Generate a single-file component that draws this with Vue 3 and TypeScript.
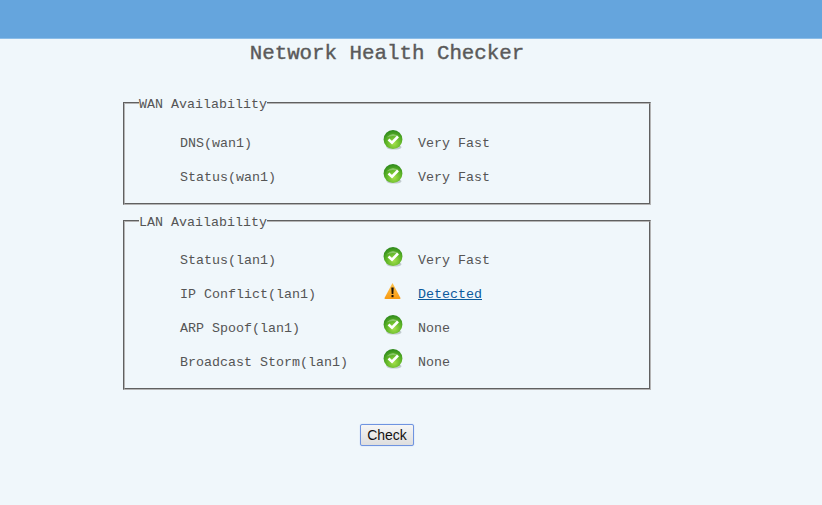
<template>
  <div class="page">
    <div class="top-bar"></div>
    <h1 class="title">Network Health Checker</h1>

    <div class="groups">
      <fieldset v-for="group in groups" :key="group.name" class="group">
        <legend>{{ group.name }}</legend>
        <div v-for="row in group.rows" :key="row.label" class="row">
          <span class="label">{{ row.label }}</span>
          <svg v-if="row.warn" class="icon" viewBox="0 0 20 20" aria-hidden="true">
            <defs>
              <linearGradient id="warnFill" x1="0" y1="0" x2="0" y2="1">
                <stop offset="0" stop-color="#ffc44d" />
                <stop offset="1" stop-color="#f79a12" />
              </linearGradient>
            </defs>
            <path d="M9.5 2 L17.5 17 Q17.8 18 16.5 18 L2.5 18 Q1.2 18 1.5 17 Z" fill="url(#warnFill)" />
            <path d="M8.3 6.5h2.4l-.4 6.5h-1.6z" fill="#1a1208" />
            <rect x="8.5" y="14" width="2" height="2.2" fill="#1a1208" />
          </svg>
          <svg v-else class="icon" viewBox="0 0 20 20" aria-hidden="true">
            <defs>
              <radialGradient id="okFill" cx="0.55" cy="0.72" r="0.7">
                <stop offset="0" stop-color="#a4e04a" />
                <stop offset="0.6" stop-color="#5cb326" />
                <stop offset="1" stop-color="#2f8a1c" />
              </radialGradient>
            </defs>
            <ellipse cx="11" cy="17.2" rx="7.5" ry="2.4" fill="#9aa5a8" opacity="0.55" />
            <circle cx="10" cy="9.5" r="9.4" fill="url(#okFill)" />
            <path d="M3.5 7.5 Q10 0.5 16.5 7.5 Q10 4.5 3.5 7.5 Z" fill="#fff" opacity="0.3" />
            <path d="M5.5 9.5 L9 12.6 L15 6.5" fill="none" stroke="#fff" stroke-width="2.6" />
          </svg>
          <a v-if="row.warn" class="value link" href="#">{{ row.value }}</a>
          <span v-else class="value">{{ row.value }}</span>
        </div>
      </fieldset>
    </div>

    <div class="actions">
      <button class="check-btn" type="button">Check</button>
    </div>
  </div>
</template>

<script setup lang="ts">
interface HealthRow {
  label: string;
  value: string;
  warn?: boolean;
}

interface HealthGroup {
  name: string;
  rows: HealthRow[];
}

const groups: HealthGroup[] = [
  {
    name: 'WAN Availability',
    rows: [
      { label: 'DNS(wan1)', value: 'Very Fast' },
      { label: 'Status(wan1)', value: 'Very Fast' }
    ]
  },
  {
    name: 'LAN Availability',
    rows: [
      { label: 'Status(lan1)', value: 'Very Fast' },
      { label: 'IP Conflict(lan1)', value: 'Detected', warn: true },
      { label: 'ARP Spoof(lan1)', value: 'None' },
      { label: 'Broadcast Storm(lan1)', value: 'None' }
    ]
  }
];
</script>

<style>
html, body {
  margin: 0;
  background: #f0f7fb;
}
</style>

<style scoped>
.page {
  height: 505px;
  overflow: hidden;
  background: #f0f7fb;
  font-family: "Liberation Mono", monospace;
  color: #555;
}

.top-bar {
  height: 39px;
  background: #65a5dd;
  border-bottom: 1px solid #8bbde8;
  box-sizing: border-box;
}

.title {
  margin: 0;
  padding-top: 2px;
  width: 774px;
  text-align: center;
  font-size: 20.8px;
  line-height: 26px;
  font-weight: normal;
  -webkit-text-stroke: 0.4px #5a5a5a;
  color: #5a5a5a;
}

.groups {
  margin: 26px 0 0 123px;
  width: 528px;
  display: flex;
  flex-direction: column;
  gap: 6px;
}

.group {
  margin: 0;
  padding: 13px 0 9px 55px;
  min-width: 0;
  border: 2px groove #b4b4b4;
}

.group + .group {
  padding-top: 12px;
}

.group legend {
  margin-left: -41px;
  padding: 4px 0 0;
  font-size: 13.33px;
  line-height: 16px;
}

.row {
  display: flex;
  align-items: center;
  height: 34px;
  font-size: 13.33px;
}

.label {
  width: 203px;
}

.icon {
  width: 20px;
  height: 20px;
  margin: -6px 15px 0 0;
}

.link {
  color: #0b5a9c;
  text-decoration: underline;
}

.actions {
  margin: 34px 0 0 360px;
}

.check-btn {
  display: block;
  width: 54px;
  height: 22px;
  padding: 0;
  font-family: "Liberation Sans", Arial, sans-serif;
  font-size: 14px;
  color: #111;
  background: linear-gradient(#f6f6f6, #dedede);
  border: 1px solid #6f94e0;
  border-radius: 2px;
  box-shadow: 0 0 1px #8fb0f0;
}
</style>
